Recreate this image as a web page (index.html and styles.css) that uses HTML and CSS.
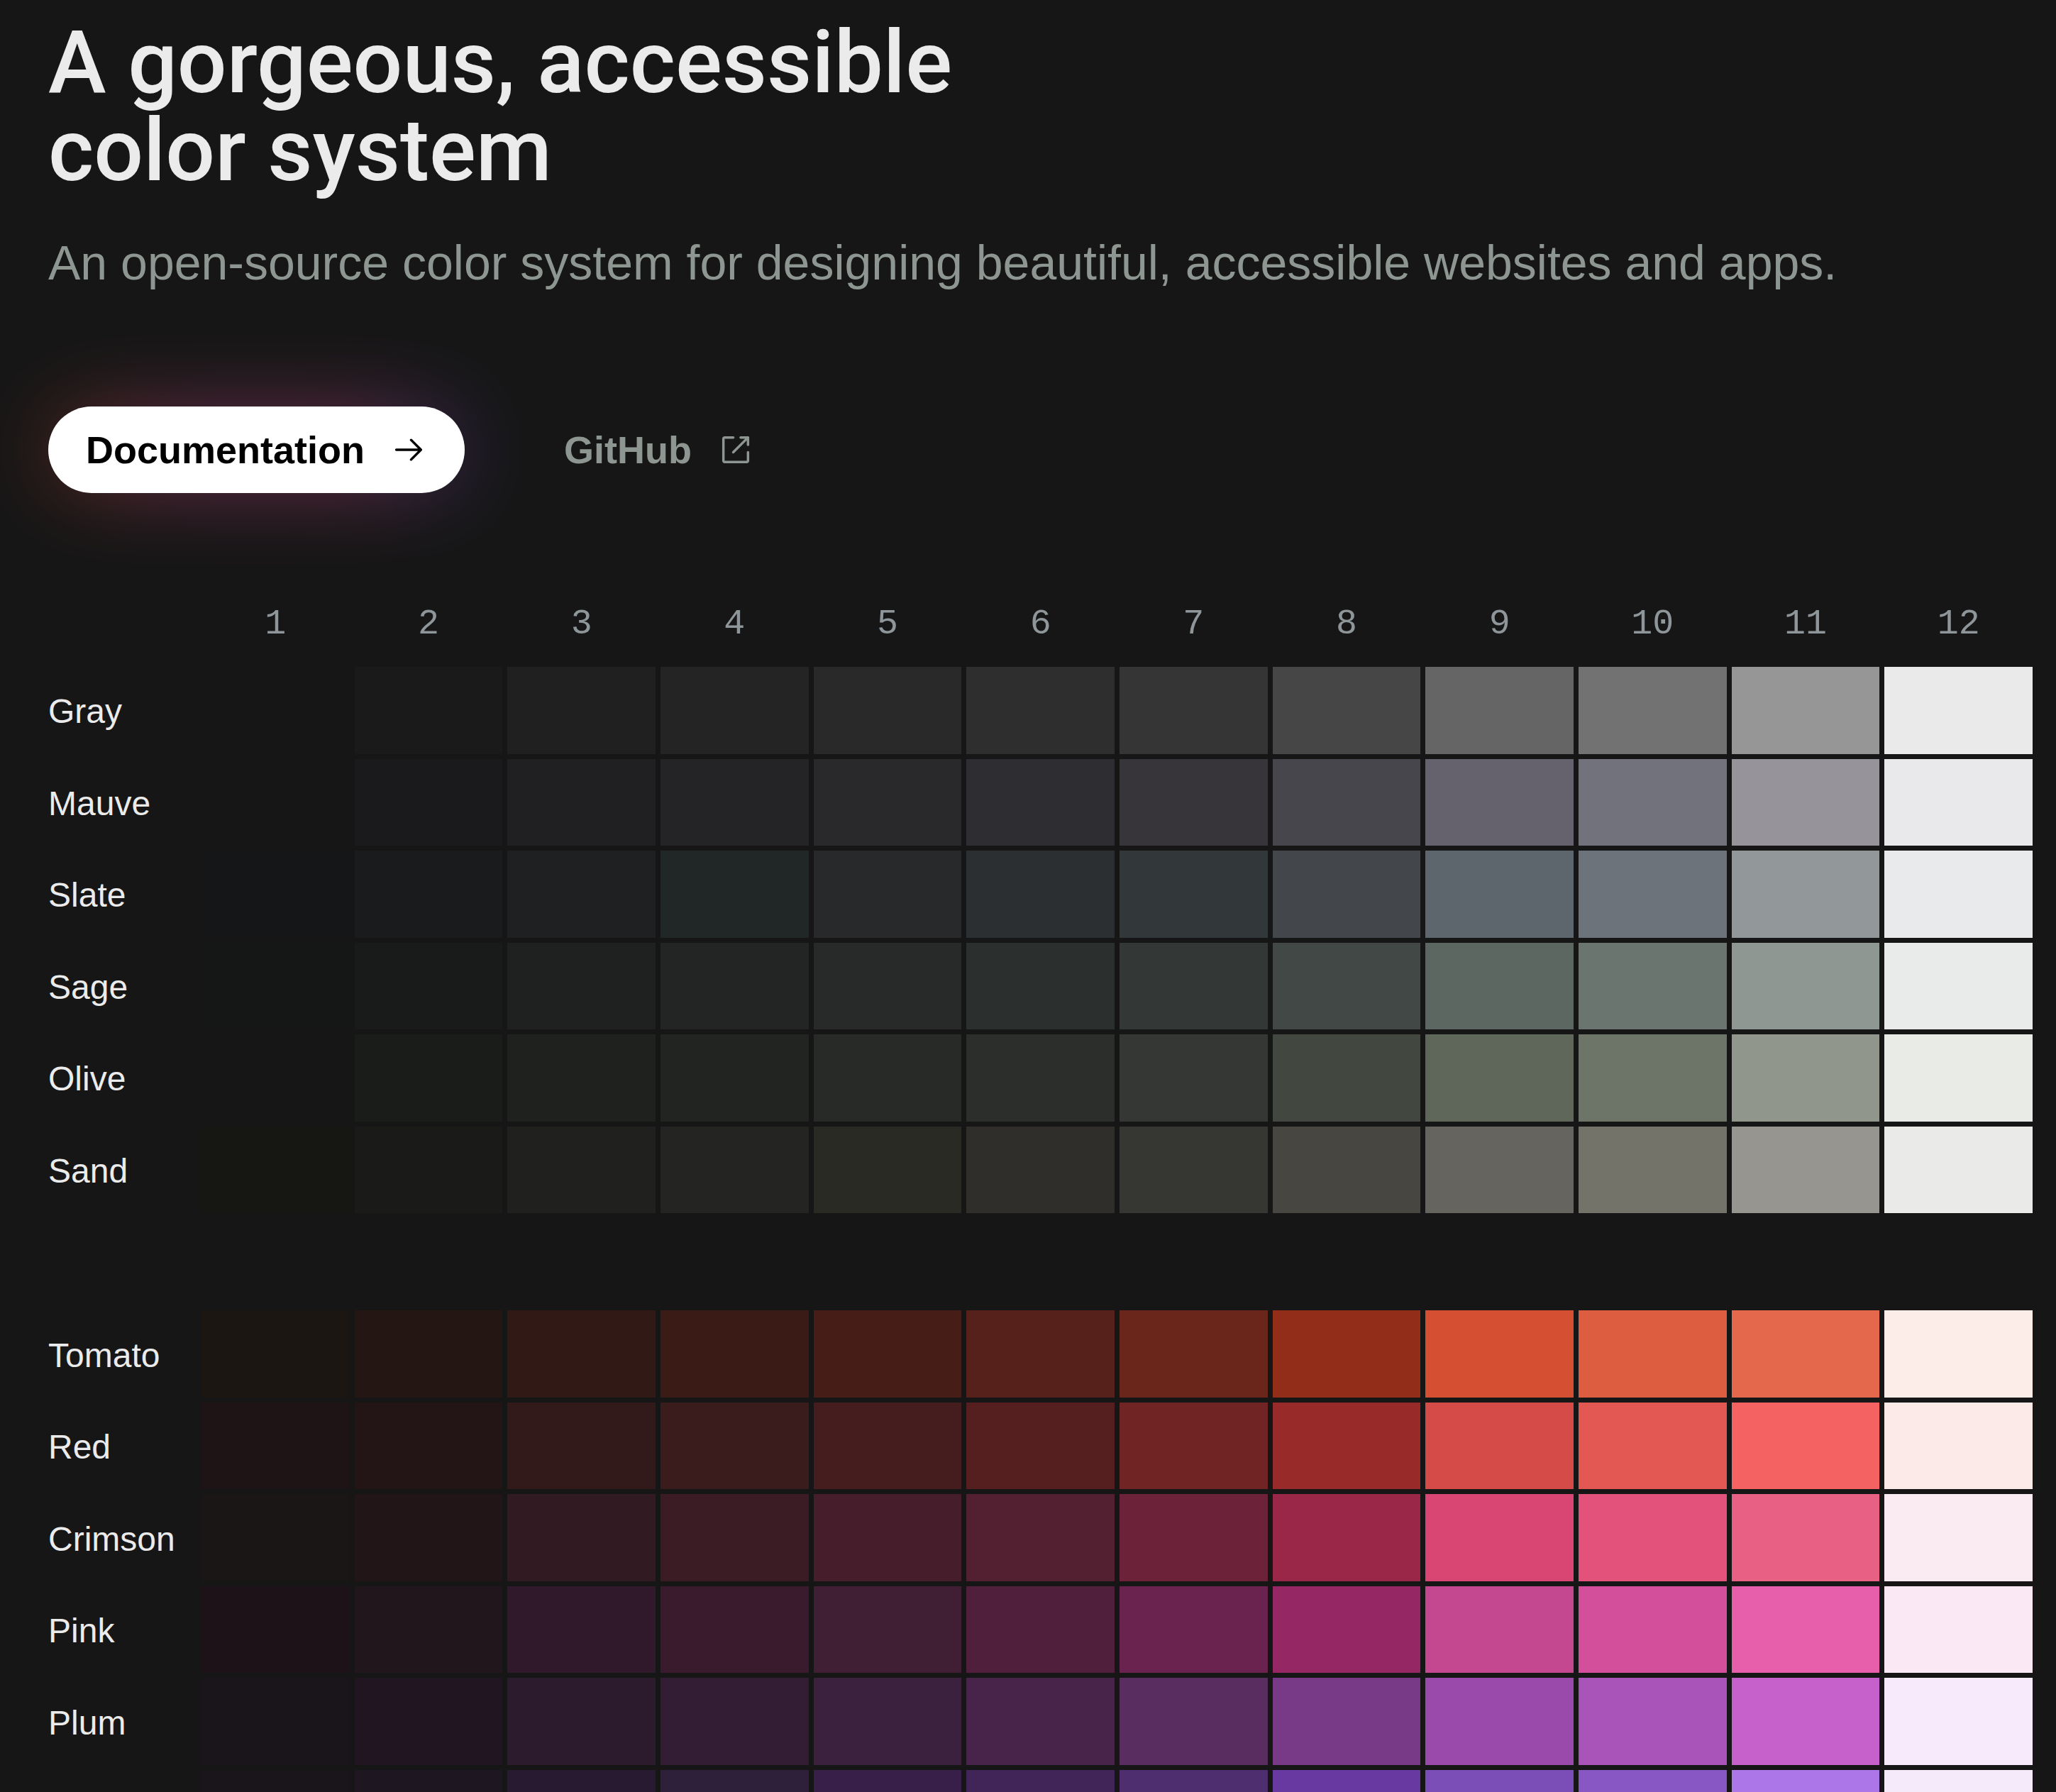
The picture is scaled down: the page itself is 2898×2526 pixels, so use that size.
FILE: index.html
```html
<!DOCTYPE html>
<html lang="en">
<head>
<meta charset="utf-8">
<title>Colors</title>
<link rel="stylesheet" href="styles.css">
</head>
<body>
<main class="page">
  <header class="hero">
    <h1 class="title">A gorgeous, accessible<br>color system</h1>
    <p class="lead">An open-source color system for designing beautiful, accessible websites and apps.</p>
    <nav class="actions">
      <a class="button" href="#docs">Documentation
        <svg class="icon" viewBox="0 0 15 15" aria-hidden="true"><path fill="currentColor" fill-rule="evenodd" d="M8.14645 3.14645C8.34171 2.95118 8.65829 2.95118 8.85355 3.14645L12.8536 7.14645C13.0488 7.34171 13.0488 7.65829 12.8536 7.85355L8.85355 11.8536C8.65829 12.0488 8.34171 12.0488 8.14645 11.8536C7.95118 11.6583 7.95118 11.3417 8.14645 11.1464L11.2929 8H2.5C2.22386 8 2 7.77614 2 7.5C2 7.22386 2.22386 7 2.5 7H11.2929L8.14645 3.85355C7.95118 3.65829 7.95118 3.34171 8.14645 3.14645Z"/></svg>
      </a>
      <a class="link" href="#github">GitHub
        <svg class="icon" viewBox="0 0 15 15" aria-hidden="true"><path fill="currentColor" fill-rule="evenodd" d="M3 2C2.44772 2 2 2.44772 2 3V12C2 12.5523 2.44772 13 3 13H12C12.5523 13 13 12.5523 13 12V8.5C13 8.22386 12.7761 8 12.5 8C12.2239 8 12 8.22386 12 8.5V12H3V3L6.5 3C6.77614 3 7 2.77614 7 2.5C7 2.22386 6.77614 2 6.5 2H3ZM12.8536 2.14645C12.9015 2.19439 12.9377 2.24964 12.9621 2.30861C12.9861 2.36669 12.9996 2.4303 13 2.497L13 2.5V2.50049V5.5C13 5.77614 12.7761 6 12.5 6C12.2239 6 12 5.77614 12 5.5V3.70711L6.85355 8.85355C6.65829 9.04882 6.34171 9.04882 6.14645 8.85355C5.95118 8.65829 5.95118 8.34171 6.14645 8.14645L11.2929 3H9.5C9.22386 3 9 2.77614 9 2.5C9 2.22386 9.22386 2 9.5 2H12.4999H12.5C12.5678 2 12.6324 2.01349 12.6914 2.03794C12.7504 2.06234 12.8056 2.09851 12.8536 2.14645Z"/></svg>
      </a>
    </nav>
  </header>
  <table class="scales" id="scales">
    <thead><tr class="row"><td></td></tr></thead>
  </table>
</main>
<script src="scales.js"></script>
</body>
</html>
```
FILE: styles.css
```css
* {
  box-sizing: border-box;
}

body {
  margin: 0;
  background: #161616;
  color: #ebebec;
  font-family: "Liberation Sans", Arial, sans-serif;
}

.page {
  height: 100vh;
  overflow: hidden;
  padding: 26px 33px 0 68px;
}

.title {
  margin: 0;
  font-family: Roboto, "Liberation Sans", sans-serif;
  font-size: 123px;
  line-height: 124px;
  font-weight: 500;
}

.lead {
  margin: 50px 0 0;
  font-size: 68px;
  line-height: 92px;
  color: #8e9692;
}

.actions {
  display: flex;
  align-items: center;
  gap: 140px;
  margin-top: 157px;
}

.button,
.link {
  display: flex;
  align-items: center;
  gap: 36px;
  font-size: 54px;
  line-height: 122px;
  font-weight: 700;
  text-decoration: none;
}

.button {
  position: relative;
  padding: 0 53px;
  border-radius: 61px;
  background: #fff;
  color: #000;
}

/* Coloured glow behind the main button */
.button::before {
  content: "";
  position: absolute;
  inset: 0;
  z-index: -1;
  border-radius: 61px;
  background: linear-gradient(90deg, #b8431c, #cf4b8c 30%, #cf4b8c 75%, #4a46b8);
  filter: blur(56px);
  opacity: 0.38;
}

.link {
  color: #8e9692;
}

.icon {
  width: 52px;
  height: 52px;
}

.scales {
  display: block;
  margin-top: 144px;
}

.scales thead {
  display: block;
  margin-bottom: 19px;
}

.group {
  display: grid;
  gap: 7px;
}

.group + .group {
  margin-top: 137px;
}

.row {
  display: grid;
  grid-template-columns: 209px repeat(12, minmax(0, 1fr));
  align-items: center;
  gap: 7px;
}

.row td,
.row th {
  padding: 0;
  font-weight: 400;
}

.row .step {
  font-family: "Liberation Mono", monospace;
  font-size: 50px;
  line-height: 82px;
  color: #8f969a;
  text-align: center;
}

.row .name {
  padding-top: 4px;
  font-size: 48px;
  line-height: 54px;
  text-align: left;
}

.swatch {
  aspect-ratio: 63 / 37;
}
```
FILE: scales.js
```js
const groups = [
  {
    Gray: "161616 1a1a1a 202020 242424 292929 2e2e2e 353535 464646 656565 727272 969696 eaeaea",
    Mauve: "161616 1a1a1c 202022 242426 29292b 2e2d32 37353a 47464c 66626d 72727c 96949a e9e9eb",
    Slate: "151618 1a1b1d 1f2022 212627 28292b 2b2f32 323739 43464b 5d666d 6c737a 929799 e9eaec",
    Sage: "151716 191b1a 1e211f 232524 272a28 2b2f2e 333735 424846 5d6762 6b756f 8e9792 e9ebea",
    Olive: "161616 191c18 1e211d 222421 272a27 2c2e2b 353734 42473f 5f675a 6d7569 91968d e9ebe7",
    Sand: "161613 1a1a18 20201e 242422 2a2a25 302e2a 363732 484641 66645e 74736a 979590 eaeae8",
  },
  {
    Tomato: "1b1612 241613 311a16 3b1b16 461e17 56211a 6b261b 922d1a d55032 dd5d40 e3684c fcede8",
    Red: "1e1415 231515 311a19 3b1c1d 451d1e 561f1f 702524 982b29 d54b47 e35853 f46361 fbeae8",
    Crimson: "1b1616 211518 321a23 3b1c25 461d2b 532032 6c2239 9b2748 d94674 e2527b e96085 faeaf1",
    Pink: "1d1217 20161c 30192a 3a1b2e 401e33 501f3c 6a234e 942764 c4488f d44f9b e75eab fae9f4",
    Plum: "1a151a 211522 2c1b2c 331d35 3c213f 48244b 5a2d60 783987 994aab a954b9 c660ca f7eafb",
    Purple: "1a151a 1e1722 281a31 2e1f3b 371f49 412558 4f2e70 683aa1 7b4eb7 8957c4 ad76e8 f4eafa",
  },
];

const table = document.getElementById("scales");
const head = table.tHead.rows[0];

for (let step = 1; step <= 12; step++) {
  const th = document.createElement("th");
  th.className = "step";
  th.scope = "col";
  th.textContent = step;
  head.append(th);
}

for (const group of groups) {
  const body = table.createTBody();
  body.className = "group";
  for (const [name, colors] of Object.entries(group)) {
    const row = body.insertRow();
    row.className = "row";
    const th = document.createElement("th");
    th.className = "name";
    th.scope = "row";
    th.textContent = name;
    row.append(th);
    for (const color of colors.split(" ")) {
      const cell = row.insertCell();
      cell.className = "swatch";
      cell.style.background = "#" + color;
    }
  }
}
```
